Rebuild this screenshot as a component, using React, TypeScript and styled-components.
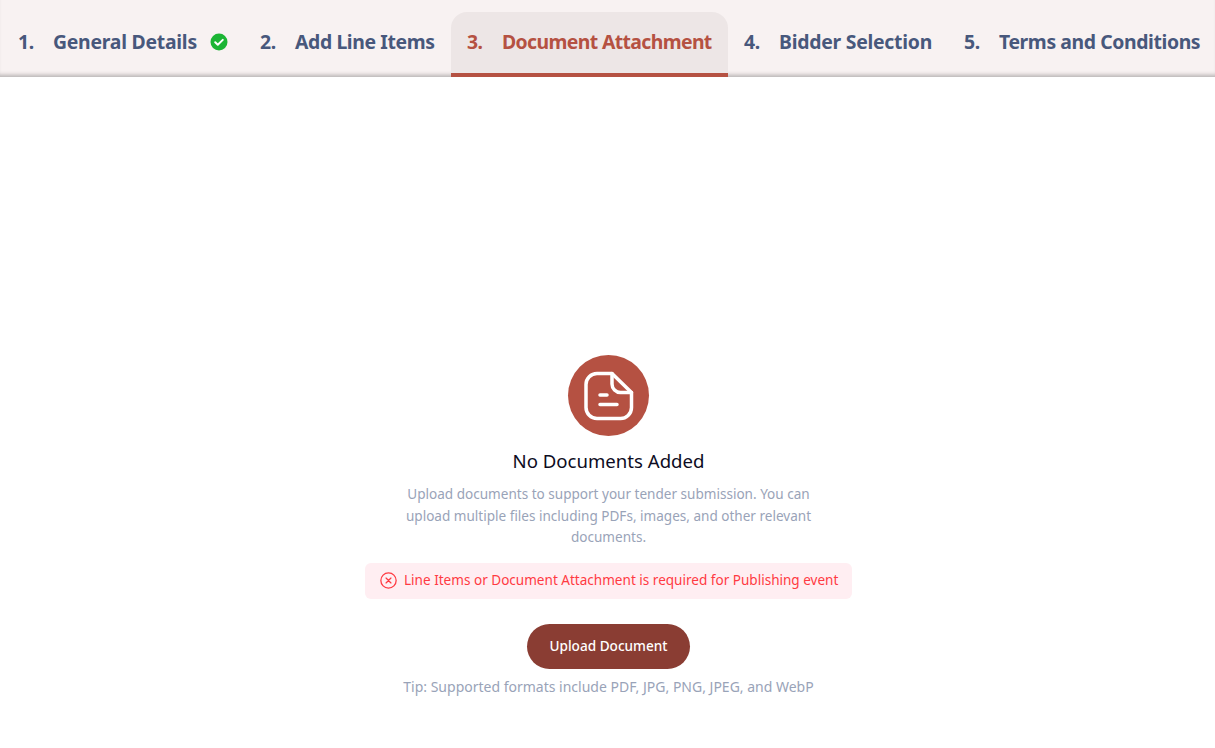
import React from 'react';
import styled, { createGlobalStyle } from 'styled-components';

const GlobalStyle = createGlobalStyle`
  html, body {
    margin: 0;
    padding: 0;
    background: #ffffff;
    font-family: "Noto Sans", "Open Sans", sans-serif;
  }
`;

const Page = styled.div`
  width: 1215px;
  height: 748px;
  overflow: hidden;
  background: #ffffff;
`;

const TabBar = styled.nav`
  height: 77px;
  box-sizing: border-box;
  padding: 12px 0 0 2px;
  display: flex;
  align-items: stretch;
  background: #f8f2f2;
  box-shadow: inset 0 -5px 4px -3px #b4b0b0;
  white-space: nowrap;
`;

const Tab = styled.div<{ $active?: boolean; $width: number; $spacing: number }>`
  width: ${({ $width }) => $width}px;
  flex: none;
  box-sizing: border-box;
  padding: 0 0 2px 16px;
  display: flex;
  align-items: center;
  font-size: 19.4px;
  font-weight: 700;
  letter-spacing: ${({ $spacing }) => $spacing}px;
  color: ${({ $active }) => ($active ? '#b55142' : '#48587c')};
  background: ${({ $active }) => ($active ? '#ede6e6' : 'transparent')};
  border-bottom: 4px solid ${({ $active }) => ($active ? '#b55142' : 'transparent')};
  border-radius: 16px 16px 0 0;
`;

const TabNumber = styled.span`
  width: 35px;
  flex: none;
`;

const CheckIcon = styled.svg`
  margin-left: 13px;
  flex: none;
`;

const Content = styled.main`
  padding: 278px 0 0 2px;
  display: flex;
  flex-direction: column;
  align-items: center;
`;

const IconCircle = styled.div`
  width: 81px;
  height: 81px;
  border-radius: 50%;
  background: #b55142;
  display: flex;
  align-items: center;
  justify-content: center;
`;

const Title = styled.h2`
  margin: 12px 0 0;
  font-size: 18.6px;
  line-height: 25px;
  font-weight: 400;
  color: #0d0c22;
`;

const Description = styled.p`
  margin: 11px 0 0;
  width: 424px;
  text-align: center;
  font-size: 13.55px;
  line-height: 21.5px;
  color: #99a3b8;
`;

const ErrorBox = styled.div`
  margin-top: 14px;
  width: 487px;
  height: 36px;
  box-sizing: border-box;
  padding: 0 0 2px 15px;
  display: flex;
  align-items: center;
  gap: 7px;
  border-radius: 6px;
  background: #ffeef2;
  color: #ff3a42;
  font-size: 13.55px;
`;

const ErrorIcon = styled.svg`
  margin-top: 2px;
  flex: none;
`;

const UploadButton = styled.button`
  margin-top: 25px;
  width: 163px;
  height: 45px;
  padding: 0 0 2px;
  border: none;
  border-radius: 23px;
  background: #8a3d33;
  color: #ffffff;
  font-family: inherit;
  font-size: 13.6px;
  font-weight: 500;
`;

const Tip = styled.p`
  margin: 8px 0 0;
  font-size: 14px;
  line-height: 20px;
  color: #99a3b8;
`;

const tabs = [
  { n: '1.', label: 'General Details', width: 242, spacing: -0.25, done: true },
  { n: '2.', label: 'Add Line Items', width: 207, spacing: -0.39 },
  { n: '3.', label: 'Document Attachment', width: 277, spacing: -0.62, active: true },
  { n: '4.', label: 'Bidder Selection', width: 220, spacing: -0.25 },
  { n: '5.', label: 'Terms and Conditions', width: 267, spacing: -0.4 },
];

export default function App() {
  return (
    <Page>
      <GlobalStyle />
      <TabBar>
        {tabs.map((t) => (
          <Tab key={t.n} $active={t.active} $width={t.width} $spacing={t.spacing}>
            <TabNumber>{t.n}</TabNumber>
            {t.label}
            {t.done && (
              <CheckIcon width="18" height="18" viewBox="0 0 18 18">
                <circle cx="9" cy="9" r="8.5" fill="#1cb535" />
                <path d="M5.2 9.3l2.6 2.5 5-4.9" fill="none" stroke="#fff" strokeWidth="2" strokeLinecap="round" strokeLinejoin="round" />
              </CheckIcon>
            )}
          </Tab>
        ))}
      </TabBar>
      <Content>
        <IconCircle>
          <svg width="50" height="50" viewBox="0 0 50 50" fill="none" stroke="#fff" strokeWidth="3.5" strokeLinecap="round" strokeLinejoin="round">
            <path d="M28 2.5H13A11 11 0 0 0 2 13.500V36.500A11 11 0 0 0 13 47.500H36A11 11 0 0 0 47.500 36.500V21.500Z" />
            <path d="M28 2.500V13A8.500 8.500 0 0 0 36.500 21.500H47.500" />
            <path d="M16 24H23M16 33.500H33" />
          </svg>
        </IconCircle>
        <Title>No Documents Added</Title>
        <Description>
          Upload documents to support your tender submission. You can upload multiple files including PDFs, images, and other relevant documents.
        </Description>
        <ErrorBox>
          <ErrorIcon width="17" height="17" viewBox="0 0 16 16" fill="none" stroke="#ff3a42" strokeWidth="1.200" strokeLinecap="round">
            <circle cx="8" cy="8" r="7.200" />
            <path d="M5.700 5.700l4.600 4.600M10.300 5.700l-4.600 4.600" />
          </ErrorIcon>
          Line Items or Document Attachment is required for Publishing event
        </ErrorBox>
        <UploadButton>Upload Document</UploadButton>
        <Tip>Tip: Supported formats include PDF, JPG, PNG, JPEG, and WebP</Tip>
      </Content>
    </Page>
  );
}
